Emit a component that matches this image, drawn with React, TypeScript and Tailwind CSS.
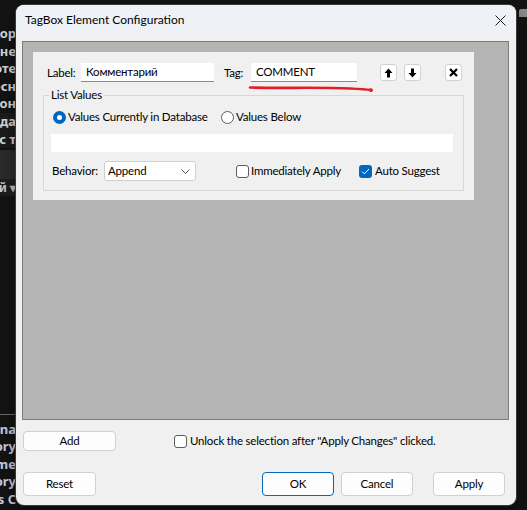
import React from 'react';

const sideTop = [
    { text: 'Коридор', bg: '' },
    { text: 'Колонне', bg: '' },
    { text: 'Поэте', bg: '' },
    { text: 'Песн', bg: '' },
    { text: 'Вагон', bg: '' },
    { text: 'Погода', bg: 'bg-[#1c1c1c]' },
    { text: 'Вечер с т', bg: 'bg-[#1c1c1c]' },
];

const sideBottom = ['Luna', 'Category', 'Theme', 'Story', "Poet's C"];

const ArrowUp = () => (
    <svg width="9" height="10" viewBox="0 0 9 10">
        <path d="M4.5 0.5 L8.5 5 L6 5 L6 9.5 L3 9.5 L3 5 L0.5 5 Z" fill="#000" />
    </svg>
);

const ArrowDown = () => (
    <svg width="9" height="10" viewBox="0 0 9 10">
        <path d="M4.5 9.5 L8.5 5 L6 5 L6 0.5 L3 0.5 L3 5 L0.5 5 Z" fill="#000" />
    </svg>
);

const BoldX = () => (
    <svg width="9" height="9" viewBox="0 0 9 9">
        <path d="M1 1 L8 8 M8 1 L1 8" stroke="#000" strokeWidth="2.2" />
    </svg>
);

const IconButton: React.FC<{ children: React.ReactNode; className?: string }> = ({ children, className }) => (
    <div className={`w-[17px] h-[17px] bg-white border border-[#d2d2d2] rounded-[3px] flex items-center justify-center shrink-0 ${className ?? ''}`}>
        {children}
    </div>
);

const Checkbox: React.FC<{ checked?: boolean }> = ({ checked }) =>
    checked ? (
        <div className="w-[13px] h-[13px] rounded-[3px] bg-[#0067c0] flex items-center justify-center shrink-0">
            <svg width="9" height="7" viewBox="0 0 9 7">
                <path d="M1 3.5 L3.3 5.8 L8 1" stroke="#fff" strokeWidth="1" fill="none" />
            </svg>
        </div>
    ) : (
        <div className="w-[13px] h-[13px] rounded-[3px] bg-white border border-[#5c5c5c] shrink-0" />
    );

const Radio: React.FC<{ checked?: boolean }> = ({ checked }) =>
    checked ? (
        <div className="w-[13px] h-[13px] rounded-full bg-[#0067c0] flex items-center justify-center shrink-0">
            <div className="w-[5px] h-[5px] rounded-full bg-white" />
        </div>
    ) : (
        <div className="w-[13px] h-[13px] rounded-full bg-white border border-[#5c5c5c] shrink-0" />
    );

const Button: React.FC<{ label: string; w: string; primary?: boolean; h?: string }> = ({ label, w, primary, h }) => (
    <div
        className={`${w} ${h ?? 'h-[24px]'} bg-[#fdfdfd] rounded-[4px] border ${
            primary ? 'border-[#0067c0]' : 'border-[#d0d0d0]'
        } flex items-center justify-center text-black shrink-0`}
    >
        {label}
    </div>
);

const App: React.FC = () => {
    return (
        <div className="relative w-[527px] h-[510px] bg-[#131313] overflow-hidden font-['Lato',sans-serif] text-[11.5px] tracking-[-0.2px] text-black whitespace-nowrap">
            {/* app behind the dialog */}
            <div className="w-[16px] h-full flex flex-col font-['Noto_Sans',sans-serif] tracking-normal">
                <div className="h-[25px]" />
                {sideTop.map((row) => (
                    <div
                        key={row.text}
                        className={`h-[17.6px] flex justify-end items-center overflow-hidden text-[13px] font-bold text-[#d6d6d6] ${row.bg}`}
                    >
                        {row.text}
                    </div>
                ))}
                <div className="h-[29px] mt-[2px] bg-[#2b2b2b]" />
                <div className="h-[17px] flex justify-end items-center overflow-hidden text-[12px] font-bold text-[#c8c8c8] bg-[#1e1e1e]">
                    й ▾
                </div>
                <div className="flex-1" />
                <div className="h-px bg-[#6a6a6a]" />
                <div className="h-[6px]" />
                {sideBottom.map((t) => (
                    <div
                        key={t}
                        className="h-[17.4px] flex justify-end items-center overflow-hidden text-[13px] font-bold text-[#c9cbe0]"
                    >
                        {t}
                    </div>
                ))}
                <div className="h-[2px]" />
            </div>

            {/* folder tab peeking at the right */}
            <div className="absolute left-[519px] top-[9px] w-[10px] h-[8px] bg-[#8c8c8c] rounded-tl-[2px]" />

            {/* dialog window */}
            <div className="absolute left-[16px] top-[5px] w-[500px] h-[500px] rounded-[8px] bg-[#f0f0f0] overflow-hidden shadow-[0_0_0_1px_#3a3a3a,0_6px_16px_rgba(0,0,0,0.5)] flex flex-col">
                <div className="h-[30px] bg-[#eef2f6] flex items-center justify-between pl-[9px] pr-[10px] shrink-0">
                    <span className="text-[12px] tracking-normal text-black">TagBox Element Configuration</span>
                    <svg width="11" height="11" viewBox="0 0 11 11">
                        <path d="M0.5 0.5 L10.5 10.5 M10.5 0.5 L0.5 10.5" stroke="#1a1a1a" strokeWidth="1" />
                    </svg>
                </div>

                {/* element list area */}
                <div className="mt-[6px] ml-[6px] mr-[7px] h-[379px] bg-[#b4b4b4] border border-[#7c7c7c] shrink-0 p-[10px]">
                    <div className="w-[441px] h-[148px] bg-[#f0f0f0] pt-[11px] px-[10px]">
                        <div className="flex items-center h-[19px] pl-[4px]">
                            <span className="w-[34px] shrink-0">Label:</span>
                            <div className="w-[133px] h-[19px] bg-white border-b border-[#8a8a8a] flex items-center pl-[5px] shrink-0">
                                Комментарий
                            </div>
                            <span className="ml-[10px] w-[27px] shrink-0">Tag:</span>
                            <div className="w-[106px] h-[19px] bg-white border-b border-[#8a8a8a] flex items-center pl-[5px] shrink-0">
                                COMMENT
                            </div>
                            <IconButton className="ml-[23px]">
                                <ArrowUp />
                            </IconButton>
                            <IconButton className="ml-[7px]">
                                <ArrowDown />
                            </IconButton>
                            <IconButton className="ml-[24px]">
                                <BoldX />
                            </IconButton>
                        </div>

                        <div className="relative mt-[13px] h-[96px] border border-[#d8d8d8] pl-[7px] pr-[10px] pt-[13px]">
                            <span className="absolute -top-[9px] left-[5px] bg-[#f0f0f0] px-[2px] leading-[16px]">
                                List Values
                            </span>
                            <div className="flex items-center h-[16px] ml-[2px]">
                                <Radio checked />
                                <span className="ml-[2px] w-[153px] shrink-0">Values Currently in Database</span>
                                <Radio />
                                <span className="ml-[2px]">Values Below</span>
                            </div>
                            <div className="mt-[9px] h-[18px] bg-white" />
                            <div className="mt-[9px] h-[20px] flex items-center ml-[1px]">
                                <span className="w-[52px] shrink-0">Behavior:</span>
                                <div className="w-[92px] h-[20px] bg-white border border-[#d0d0d0] rounded-[3px] flex items-center justify-between pl-[3px] pr-[5px] shrink-0">
                                    <span>Append</span>
                                    <svg width="9" height="5" viewBox="0 0 9 5">
                                        <path d="M0.5 0.5 L4.5 4.5 L8.5 0.5" stroke="#555" strokeWidth="1" fill="none" />
                                    </svg>
                                </div>
                                <div className="ml-[40px] w-[123px] flex items-center shrink-0">
                                    <Checkbox />
                                    <span className="ml-[2px]">Immediately Apply</span>
                                </div>
                                <div className="flex items-center">
                                    <Checkbox checked />
                                    <span className="ml-[3px]">Auto Suggest</span>
                                </div>
                            </div>
                        </div>
                    </div>
                </div>

                <div className="mt-[11px] h-[20px] flex items-center pl-[7px]">
                    <Button label="Add" w="w-[93px]" h="h-[20px]" />
                    <div className="ml-[58px] flex items-center">
                        <Checkbox />
                        <span className="ml-[3px]">Unlock the selection after "Apply Changes" clicked.</span>
                    </div>
                </div>

                <div className="mt-[21px] h-[24px] flex items-center pl-[7px] pr-[11px]">
                    <Button label="Reset" w="w-[73px]" />
                    <div className="ml-auto flex items-center">
                        <Button label="OK" w="w-[72px]" primary />
                        <div className="w-[7px]" />
                        <Button label="Cancel" w="w-[72px]" />
                        <div className="w-[20px]" />
                        <Button label="Apply" w="w-[72px]" />
                    </div>
                </div>
            </div>

            {/* red pen mark under the tag field */}
            <svg className="absolute left-0 top-0 pointer-events-none" width="527" height="510">
                <path
                    d="M250 87.5 C280 88.5 320 87 350 88.5 C360 89 367 89.5 371 90"
                    stroke="#e21f26"
                    strokeWidth="2.6"
                    strokeLinecap="round"
                    fill="none"
                />
                <circle cx="371" cy="90.2" r="1.9" fill="#e21f26" />
            </svg>
        </div>
    );
};

export default App;
